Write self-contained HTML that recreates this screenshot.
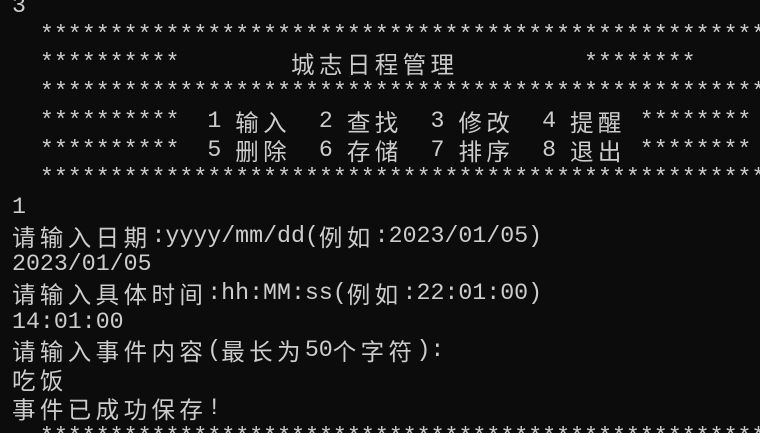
<!DOCTYPE html>
<html><head><meta charset="utf-8"><style>
html,body{margin:0;padding:0;background:#0c0c0c;width:760px;height:433px;overflow:hidden;}
body{position:relative;}
pre{position:absolute;left:12px;top:-8px;margin:0;font-family:"Liberation Mono","Noto Sans CJK SC",monospace;font-size:23.25px;line-height:28.7px;color:#cccccc;white-space:pre;}
i{font-style:normal;display:inline-block;width:27.9px;font-family:"Noto Sans CJK SC",sans-serif;font-size:23.5px;text-align:left;line-height:28.7px;height:28.7px;vertical-align:top;}
</style></head><body>
<pre>3
  *****************************************************
  **********        <i>城</i><i>志</i><i>日</i><i>程</i><i>管</i><i>理</i>         ********
  *****************************************************
  **********  1 <i>输</i><i>入</i>  2 <i>查</i><i>找</i>  3 <i>修</i><i>改</i>  4 <i>提</i><i>醒</i> ********
  **********  5 <i>删</i><i>除</i>  6 <i>存</i><i>储</i>  7 <i>排</i><i>序</i>  8 <i>退</i><i>出</i> ********
  *****************************************************
1
<i>请</i><i>输</i><i>入</i><i>日</i><i>期</i>:yyyy/mm/dd(<i>例</i><i>如</i>:2023/01/05)
2023/01/05
<i>请</i><i>输</i><i>入</i><i>具</i><i>体</i><i>时</i><i>间</i>:hh:MM:ss(<i>例</i><i>如</i>:22:01:00)
14:01:00
<i>请</i><i>输</i><i>入</i><i>事</i><i>件</i><i>内</i><i>容</i>(<i>最</i><i>长</i><i>为</i>50<i>个</i><i>字</i><i>符</i>):
<i>吃</i><i>饭</i>
<i>事</i><i>件</i><i>已</i><i>成</i><i>功</i><i>保</i><i>存</i>!
  *****************************************************
</pre>
</body></html>
